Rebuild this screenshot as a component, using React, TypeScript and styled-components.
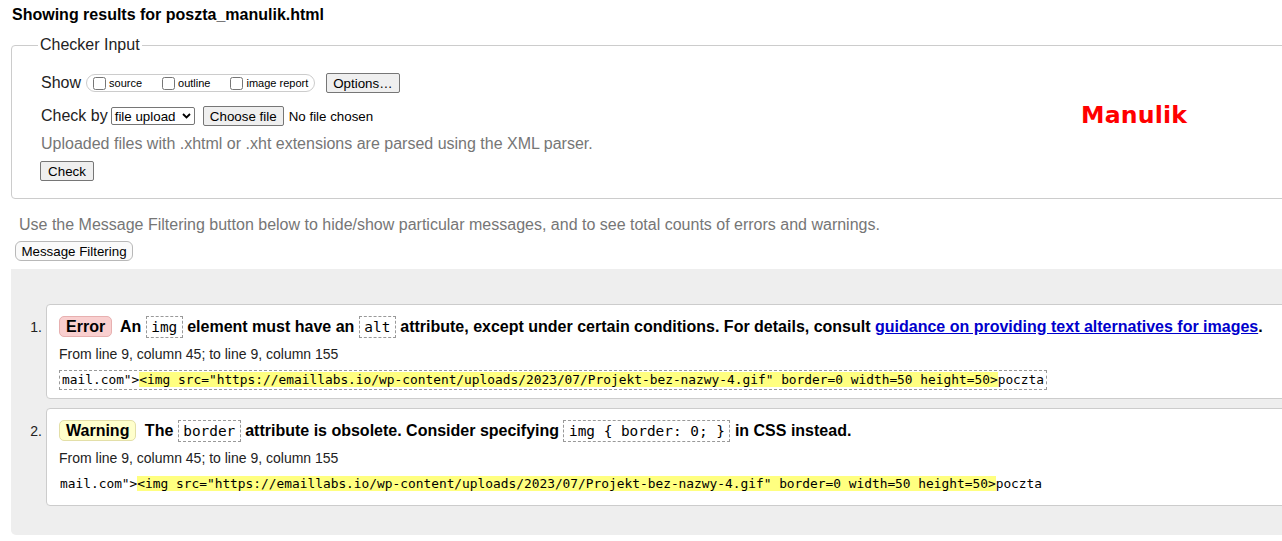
import React from 'react';
import styled, { createGlobalStyle } from 'styled-components';

const Global = createGlobalStyle`
  html, body { margin: 0; padding: 0; background: #fff; overflow: hidden; }
  body { font-family: "Liberation Sans", Arial, sans-serif; color: #000; }
`;

const Page = styled.div`
  width: 1340px;
  padding: 5px 0 0 11px;
`;

const Title = styled.h2`
  margin: 0 0 0 1px;
  font-size: 16px;
  font-weight: bold;
  line-height: 20px;
`;

const Fieldset = styled.fieldset`
  margin: 11px 0 0 0;
  padding: 0 0 17px 0;
  border: 1px solid #ccc;
  border-radius: 4px;
  min-width: 0;
`;

const Legend = styled.legend`
  margin-left: 26px;
  padding: 0 2px;
  font-size: 16px;
  line-height: 18px;
  color: #222;
`;

const FieldsetBody = styled.div`
  display: flex;
  padding: 18px 0 0 29px;
`;

const Controls = styled.div`
  width: 1040px;
  display: flex;
  flex-direction: column;
  align-items: flex-start;
`;

const Brand = styled.div`
  margin-top: 29px;
  font-family: "DejaVu Sans", Verdana, sans-serif;
  font-weight: bold;
  font-size: 23.6px;
  line-height: 28px;
  color: #f00;
  letter-spacing: 0.2px;
`;

const Row = styled.div<{ $mt?: number }>`
  display: flex;
  align-items: center;
  height: 22px;
  margin-top: ${p => p.$mt ?? 0}px;
  font-size: 16px;
  color: #222;
`;

const RowLabel = styled.span<{ $gap?: number }>`
  margin-right: ${p => p.$gap ?? 5}px;
`;

const CheckGroup = styled.div`
  display: flex;
  align-items: center;
  gap: 20px;
  height: 16px;
  padding: 0 6px;
  border: 1px solid #ccc;
  border-radius: 9px;
`;

const CheckLabel = styled.label`
  display: flex;
  align-items: center;
  gap: 3px;
  font-size: 11px;
  line-height: 13px;
  color: #000;
`;

const Box = styled.input`
  margin: 0;
  width: 13px;
  height: 13px;
`;

const Btn = styled.button<{ $px?: number; $soft?: boolean }>`
  display: inline-flex;
  align-items: center;
  justify-content: center;
  height: 20px;
  margin: 0;
  padding: 0 ${p => p.$px ?? 6}px;
  font-family: "Liberation Sans", Arial, sans-serif;
  font-size: 13.33px;
  color: #000;
  background: ${p => (p.$soft ? '#fafafa' : '#efefef')};
  border: 1px solid ${p => (p.$soft ? '#b8b8b8' : '#767676')};
  border-radius: ${p => (p.$soft ? 6 : 2)}px;
`;

const OptionsBtn = styled(Btn)`
  margin-left: 11px;
`;

const FakeSelect = styled.div`
  display: flex;
  align-items: center;
  justify-content: space-between;
  box-sizing: border-box;
  width: 84px;
  height: 18px;
  padding: 0 3px 0 3px;
  font-size: 13.33px;
  color: #000;
  background: #fff;
  border: 1px solid #767676;
  border-radius: 2px;
`;

const FileBtn = styled(Btn)`
  margin-left: 8px;
  width: 81px;
`;

const FileStatus = styled.span`
  margin-left: 5px;
  font-size: 13.33px;
  color: #000;
`;

const Hint = styled.p<{ $mt: number }>`
  margin: ${p => p.$mt}px 0 0 0;
  font-size: 16px;
  line-height: 18px;
  color: #767676;
`;

const CheckBtn = styled(Btn)`
  margin-top: 8px;
  margin-left: -1px;
  width: 54px;
`;

const FilterHint = styled.p`
  margin: 17px 0 0 8px;
  font-size: 16px;
  line-height: 18px;
  color: #767676;
`;

const FilterBtn = styled(Btn)`
  margin: 7px 0 0 4px;
  width: 118px;
  height: 20px;
`;

const Results = styled.ol`
  list-style: none;
  margin: 8px 0 0 0;
  padding: 35px 0 29px 0;
  background: #eee;
  border-radius: 0 0 0 5px;
  display: flex;
  flex-direction: column;
  gap: 9px;
`;

const Item = styled.li`
  display: flex;
  align-items: flex-start;
`;

const Num = styled.span`
  box-sizing: border-box;
  width: 35px;
  padding: 12px 4px 0 0;
  text-align: right;
  font-size: 14px;
  line-height: 22px;
  color: #222;
`;

const Card = styled.div<{ $pb: number }>`
  flex: 1;
  background: #fff;
  border: 1px solid #ccc;
  border-radius: 4px;
  padding: 11px 12px ${p => p.$pb}px 12px;
`;

const Heading = styled.div`
  font-size: 16px;
  font-weight: bold;
  line-height: 22px;
  white-space: nowrap;
`;

const Badge = styled.span<{ $kind: 'error' | 'warning' }>`
  display: inline-block;
  padding: 0 6px;
  margin-right: 4px;
  line-height: 19px;
  border-radius: 5px;
  background: ${p => (p.$kind === 'error' ? '#f9cfcf' : '#ffffcc')};
  border: 1px solid ${p => (p.$kind === 'error' ? '#e7b0b0' : '#e3dfa8')};
`;

const Code = styled.code`
  font-family: "DejaVu Sans Mono", "Liberation Mono", monospace;
  font-weight: normal;
  font-size: 14.4px;
  padding: 2px 4.5px;
  border: 1px dashed #999;
`;

const Link = styled.a`
  color: #0000cc;
  text-decoration: underline;
`;

const Location = styled.p`
  margin: 7px 0 0 0;
  font-size: 14px;
  line-height: 18px;
  color: #222;
`;

const Extract = styled.p<{ $outlined: boolean }>`
  display: inline-block;
  margin: 7px 0 0 0;
  padding: 0 ${p => (p.$outlined ? 2 : 0)}px;
  font-family: "DejaVu Sans Mono", "Liberation Mono", monospace;
  font-size: 12.85px;
  line-height: 18px;
  white-space: pre;
  border: 1px dashed ${p => (p.$outlined ? '#999' : 'transparent')};
`;

const Mark = styled.mark`
  background: #ffff80;
  color: #000;
`;

const Chevron = () => (
  <svg width="9" height="6" viewBox="0 0 9 6">
    <polyline points="1,1 4.5,4.5 8,1" fill="none" stroke="#000" strokeWidth="1.8" />
  </svg>
);

const markText =
  '<img src="https://emaillabs.io/wp-content/uploads/2023/07/Projekt-bez-nazwy-4.gif" border=0 width=50 height=50>';

export default function App() {
  return (
    <>
      <Global />
      <Page>
        <Title>Showing results for poszta_manulik.html</Title>
        <Fieldset>
          <Legend>Checker Input</Legend>
          <FieldsetBody>
            <Controls>
              <Row>
                <RowLabel>Show</RowLabel>
                <CheckGroup>
                  <CheckLabel><Box type="checkbox" />source</CheckLabel>
                  <CheckLabel><Box type="checkbox" />outline</CheckLabel>
                  <CheckLabel><Box type="checkbox" />image report</CheckLabel>
                </CheckGroup>
                <OptionsBtn>Options…</OptionsBtn>
              </Row>
              <Row $mt={11}>
                <RowLabel $gap={3}>Check by</RowLabel>
                <FakeSelect>
                  <span>file upload</span>
                  <Chevron />
                </FakeSelect>
                <FileBtn>Choose file</FileBtn>
                <FileStatus>No file chosen</FileStatus>
              </Row>
              <Hint $mt={8}>Uploaded files with .xhtml or .xht extensions are parsed using the XML parser.</Hint>
              <CheckBtn>Check</CheckBtn>
            </Controls>
            <Brand>Manulik</Brand>
          </FieldsetBody>
        </Fieldset>
        <FilterHint>
          Use the Message Filtering button below to hide/show particular messages, and to see total counts of errors and warnings.
        </FilterHint>
        <FilterBtn $soft $px={4}>Message Filtering</FilterBtn>
        <Results>
          <Item>
            <Num>1.</Num>
            <Card $pb={8}>
              <Heading>
                <Badge $kind="error">Error</Badge> An <Code>img</Code> element must have an <Code>alt</Code> attribute,
                except under certain conditions. For details, consult{' '}
                <Link href="#">guidance on providing text alternatives for images</Link>.
              </Heading>
              <Location>From line 9, column 45; to line 9, column 155</Location>
              <div>
                <Extract $outlined>
                  mail.com"&gt;<Mark>{markText}</Mark>poczta
                </Extract>
              </div>
            </Card>
          </Item>
          <Item>
            <Num>2.</Num>
            <Card $pb={11}>
              <Heading>
                <Badge $kind="warning">Warning</Badge> The <Code>border</Code> attribute is obsolete. Consider
                specifying <Code>img {'{'} border: 0; {'}'}</Code> in CSS instead.
              </Heading>
              <Location>From line 9, column 45; to line 9, column 155</Location>
              <div>
                <Extract $outlined={false}>
                  mail.com"&gt;<Mark>{markText}</Mark>poczta
                </Extract>
              </div>
            </Card>
          </Item>
        </Results>
      </Page>
    </>
  );
}
